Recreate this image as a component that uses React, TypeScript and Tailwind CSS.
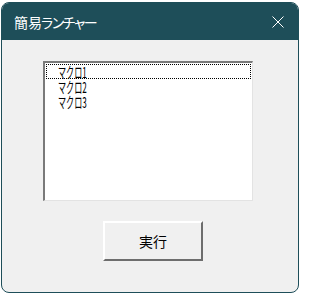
import { useState } from "react";

const items = ["マクロ1", "マクロ2", "マクロ3"];

const App = () => {
  const [selected] = useState(0);

  return (
    <div className="w-[302px] h-[296px] bg-white pt-[2px] pl-[1px] [font-family:'Noto_Sans_CJK_JP',sans-serif]">
      <div className="w-[298px] h-[291px] rounded-[8px] border border-[#1e4e59] overflow-hidden flex flex-col bg-[#f0f0f0]">
        {/* Title bar */}
        <div className="h-[37px] shrink-0 bg-[#1e4e59] flex items-center justify-between pl-[12px] pr-[14px]">
          <span className="text-white text-[14px] leading-none whitespace-nowrap">
            <span>簡易</span>
            <span className="tracking-[-3px] ml-[-2px]">ランチャー</span>
          </span>
          <svg width="12" height="12" viewBox="0 0 12 12" className="text-white">
            <path d="M0.5 0.5 L11.5 11.5 M11.5 0.5 L0.5 11.5" stroke="currentColor" strokeWidth="1" fill="none" />
          </svg>
        </div>

        {/* Body */}
        <div className="flex-1 flex flex-col">
          {/* List box */}
          <div className="mt-[21px] ml-[41px] w-[210px] h-[140px] bg-white border-t-2 border-l-2 border-r border-b border-t-[#7a7a7a] border-l-[#7a7a7a] border-r-[#e3e3e3] border-b-[#e3e3e3] pt-[1px] px-[1px]">
            {items.map((item, i) => (
              <div
                key={item}
                className={`h-[15px] pl-[11px] flex items-center ${
                  i === selected ? "border border-dotted border-black" : "border border-transparent"
                }`}
              >
                <span className="inline-block origin-left scale-x-[0.54] text-[15px] leading-[13px] text-black whitespace-nowrap">
                  {item}
                </span>
              </div>
            ))}
          </div>

          {/* Run button */}
          <button className="mt-[20px] ml-[101px] w-[100px] h-[40px] bg-[#f0f0f0] border-2 border-t-white border-l-white border-r-[#6d6d6d] border-b-[#6d6d6d] text-[14px] text-black flex items-center justify-center">
            実行
          </button>
        </div>
      </div>
    </div>
  );
};

export default App;
